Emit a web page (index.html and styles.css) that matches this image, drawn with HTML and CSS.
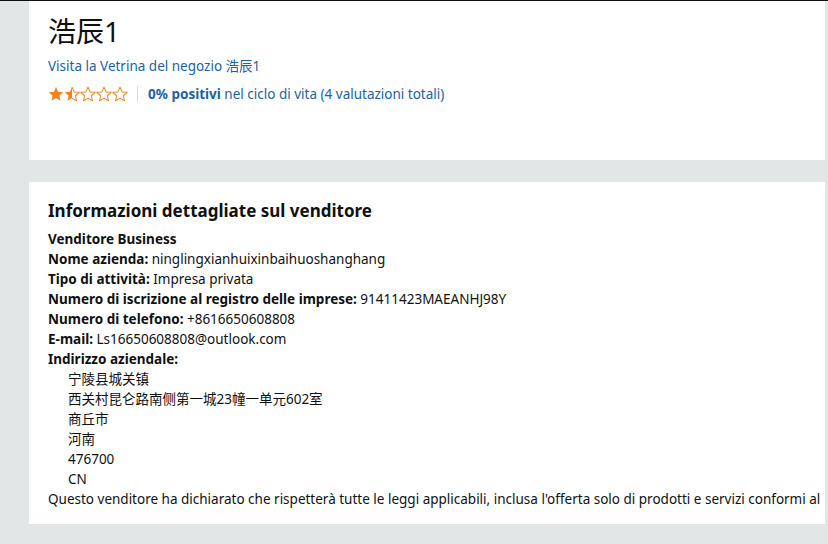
FILE: index.html
```html
<!DOCTYPE html>
<html lang="it">
<head>
  <meta charset="UTF-8">
  <title>浩辰1 - Profilo venditore</title>
  <link rel="stylesheet" href="styles.css">
</head>
<body>
  <div class="page">
    <div class="card seller-head">
      <h1>浩辰1</h1>
      <a class="link" href="#">Visita la Vetrina del negozio 浩辰1</a>
      <div class="rating">
        <span class="stars">
          <svg width="16" height="16" viewBox="1 1 22 22"><path class="full" d="M12 2.5l2.9 6.6 7.1.6-5.4 4.7 1.6 7-6.2-3.8-6.2 3.8 1.6-7L2 9.7l7.1-.6z"/></svg>
          <svg width="16" height="16" viewBox="1 1 22 22"><path class="full" d="M12 2.5v15.1l-6.2 3.8 1.6-7L2 9.7l7.1-.6z"/><path class="empty" d="M12 2.5l2.9 6.6 7.1.6-5.4 4.7 1.6 7-6.2-3.8"/></svg>
          <svg width="16" height="16" viewBox="1 1 22 22"><path class="empty" d="M12 2.5l2.9 6.6 7.1.6-5.4 4.7 1.6 7-6.2-3.8-6.2 3.8 1.6-7L2 9.7l7.1-.6z"/></svg>
          <svg width="16" height="16" viewBox="1 1 22 22"><path class="empty" d="M12 2.5l2.9 6.6 7.1.6-5.4 4.7 1.6 7-6.2-3.8-6.2 3.8 1.6-7L2 9.7l7.1-.6z"/></svg>
          <svg width="16" height="16" viewBox="1 1 22 22"><path class="empty" d="M12 2.5l2.9 6.6 7.1.6-5.4 4.7 1.6 7-6.2-3.8-6.2 3.8 1.6-7L2 9.7l7.1-.6z"/></svg>
        </span>
        <span class="divider"></span>
        <a class="link" href="#"><b>0% positivi</b> nel ciclo di vita (4 valutazioni totali)</a>
      </div>
    </div>

    <div class="card seller-info">
      <h3>Informazioni dettagliate sul venditore</h3>
      <div class="row"><b>Venditore Business</b></div>
      <div class="row"><b>Nome azienda:</b> ninglingxianhuixinbaihuoshanghang</div>
      <div class="row"><b>Tipo di attività:</b> Impresa privata</div>
      <div class="row"><b>Numero di iscrizione al registro delle imprese:</b> 91411423MAEANHJ98Y</div>
      <div class="row"><b>Numero di telefono:</b> +8616650608808</div>
      <div class="row"><b>E-mail:</b> Ls16650608808@outlook.com</div>
      <div class="row"><b>Indirizzo aziendale:</b></div>
      <div class="row indent">宁陵县城关镇</div>
      <div class="row indent">西关村昆仑路南侧第一城23幢一单元602室</div>
      <div class="row indent">商丘市</div>
      <div class="row indent">河南</div>
      <div class="row indent">476700</div>
      <div class="row indent">CN</div>
      <div class="row">Questo venditore ha dichiarato che rispetterà tutte le leggi applicabili, inclusa l'offerta solo di prodotti e servizi conformi al</div>
    </div>
  </div>
</body>
</html>
```

FILE: styles.css
```css
body {
  margin: 0;
  background: #e3e6e6;
  font-family: "Noto Sans", "Noto Sans CJK SC", sans-serif;
  font-size: 13.5px;
  color: #0f1111;
  overflow: hidden;
}
.page {
  border-top: 1px solid #0f1111;
  padding: 0 3px 0 29px;
  height: 543px;
}
.card {
  background: white;
  padding: 0 0 0 19px;
  overflow: hidden;
}
.seller-head {
  height: 159px;
  padding-top: 12px;
  box-sizing: border-box;
  margin-bottom: 22px;
}
h1 {
  font-size: 28px;
  font-weight: 400;
  line-height: 36px;
  margin: 0 0 7px;
}
.link {
  color: #2162a1;
  text-decoration: none;
  line-height: 20px;
}
.rating {
  display: flex;
  align-items: center;
  margin-top: 8px;
  height: 20px;
}
.stars {
  display: flex;
}
.stars svg {
  display: block;
}
.stars .full {
  fill: #f0821e;
}
.stars .empty {
  fill: none;
  stroke: #f0821e;
  stroke-width: 1.4;
  stroke-linejoin: round;
}
.divider {
  width: 1px;
  height: 16px;
  background: #dcdfdf;
  margin: 0 10px 0 9px;
}
.seller-info {
  height: 342px;
  padding-top: 17px;
  box-sizing: border-box;
}
h3 {
  font-size: 17px;
  font-weight: 700;
  line-height: 24px;
  margin: 0 0 6px;
}
.row {
  line-height: 20px;
  white-space: nowrap;
}
.indent {
  padding-left: 20px;
}
```
